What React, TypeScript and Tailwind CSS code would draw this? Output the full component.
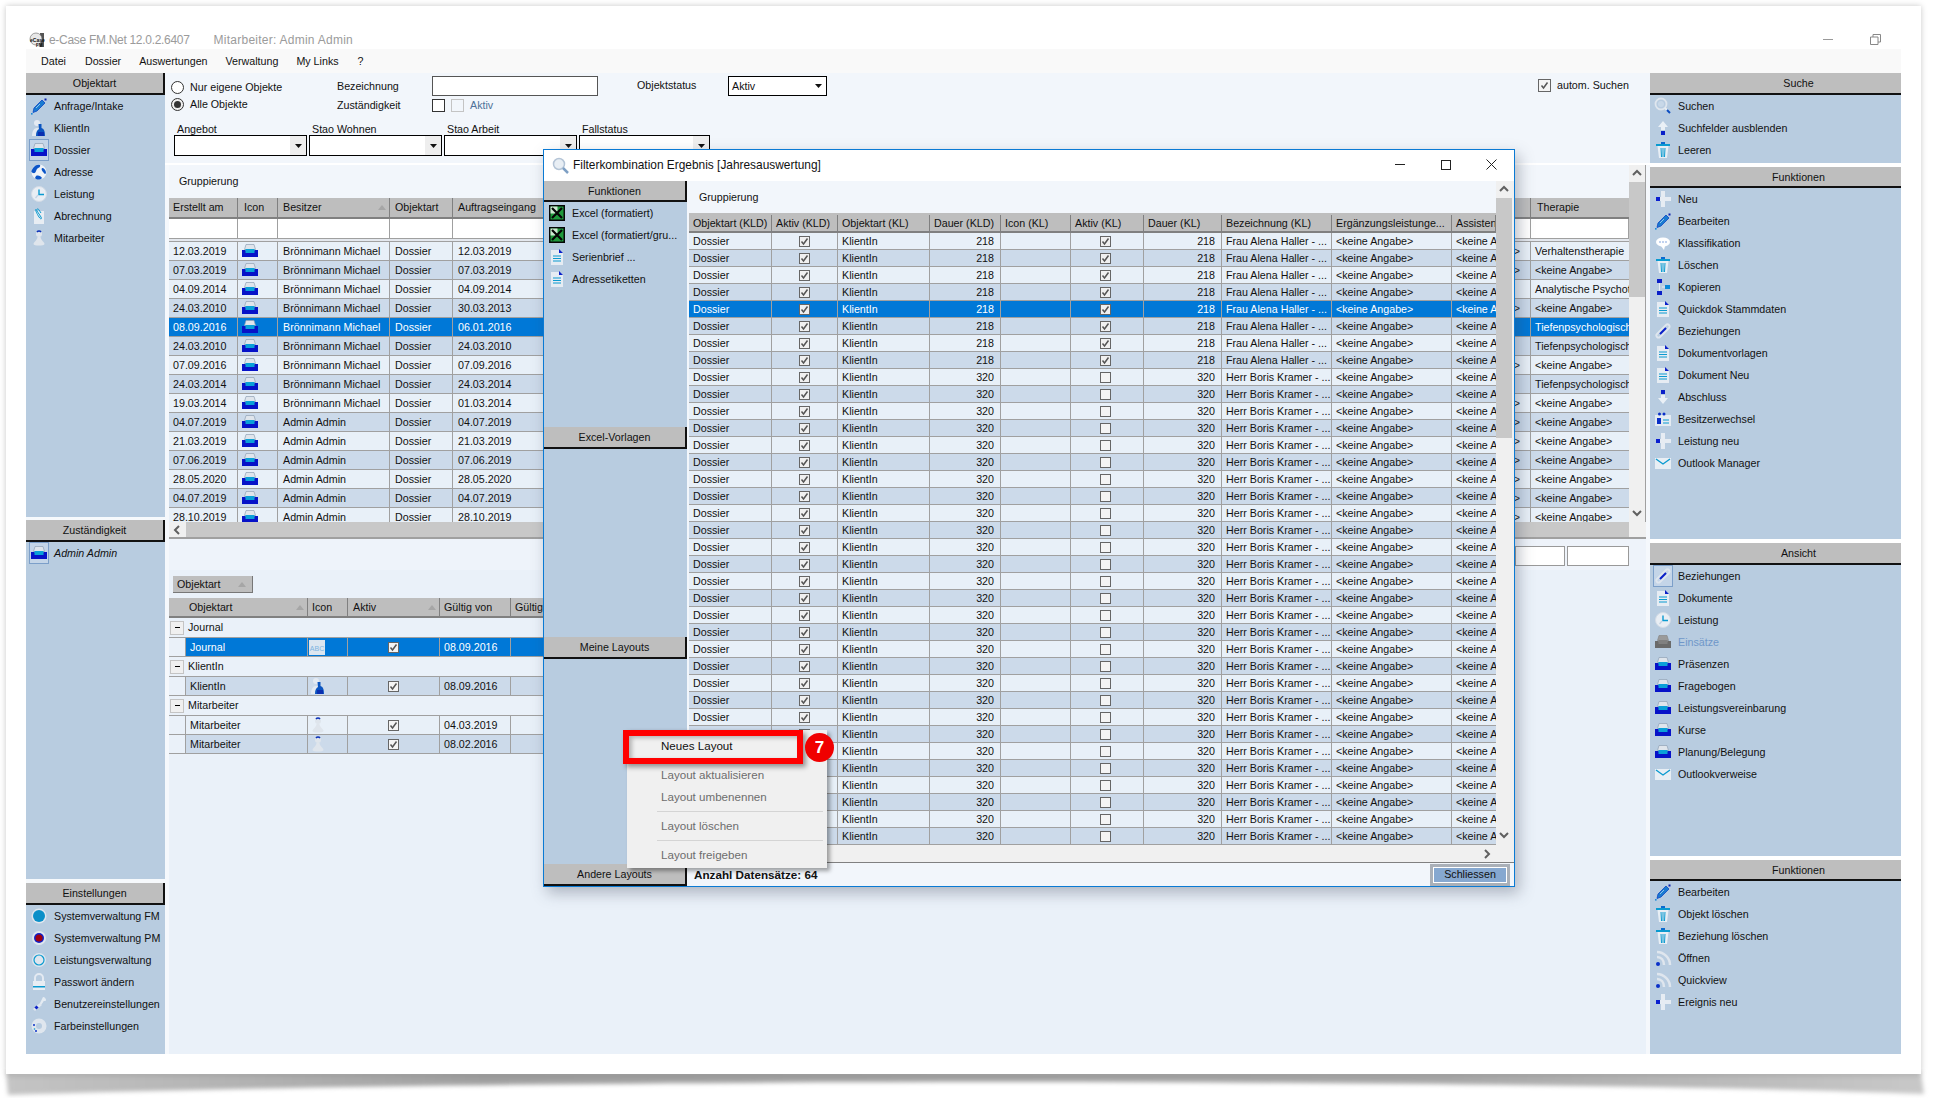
import React from "react";

type IP = { gray?: boolean };
const S = ({ children, w = 18 }: { children: React.ReactNode; w?: number }) => (
  <svg width={w} height={18} viewBox="0 0 18 18" className="shrink-0">{children}</svg>
);
const Pencil = () => (<S><path d="M4 11 12 3l3 3-8 8-4 1.5Z" fill="#1a7bd0" stroke="#0b46c4" strokeWidth=".8" /><rect x="14.5" y="1.5" width="2" height="2" fill="#0a1fb0" /><rect x="1" y="16" width="1.6" height="1.6" fill="#1a8ad8" /><path d="M6 11l4-4" stroke="#8cc4ee" /></S>);
const Person = () => (<S><circle cx="7" cy="4" r="3" fill="#e4eaf2" /><path d="M2 17c0-5 2-8 5-8s3 3 3 8Z" fill="#e4eaf2" /><path d="M8.500 5h3v4c3 1 3.500 4 3.500 8H6c0-4 1-6 3-7Z" fill="#0b55c0" /><path d="M8 13h6v4H8Z" fill="#0a2fb0" /></S>);
const Tray = ({ gray }: IP) => (<S><path d="M3.500 7.500 5 2.500h8l1.500 5Z" fill={gray ? "#9a9a9a" : "#dfe5ec"} stroke={gray ? "#888" : "#8fa0b4"} strokeWidth=".7" /><path d="M1 8h3.500l1 2h7l1-2H17v7H1Z" fill={gray ? "#6a6a6a" : "#0712c8"} /><rect x="4.500" y="7" width="9" height="4" fill={gray ? "#808080" : "#0aa0d8"} /></S>);
const Globe = () => (<S><circle cx="9" cy="9" r="7.500" fill="#eef3f8" /><path d="M3 5c2-3 5-4 7-3 1 2-2 3-3 4s-1 5-4 4-1-3 0-5ZM12 5c2 0 4 2 4 5-1 2-2 0-3-1s-2-3-1-4ZM6 13c2-1 5 0 6 2-2 2-5 2-7 0Z" fill="#0b55c8" /></S>);
const Clock = () => (<S><circle cx="9" cy="9" r="7.500" fill="#e9eef4" stroke="#d4dce6" /><path d="M9 4.500V9.500H14" stroke="#0a9ad0" strokeWidth="1.400" fill="none" /><path d="M8 10 5.500 13" stroke="#c3d3e4" strokeWidth="1.200" /></S>);
const Clip = () => (<S><path d="M4 4h10v13H4Z" fill="#e8edf3" /><path d="M6 2c-1 1 1 5 3 8s3 2 2 0-3-4-4-6 1-3 2-1l2 3" stroke="#0a9ad0" strokeWidth="1" fill="none" /></S>);
const Pawn = () => (<S><circle cx="9" cy="5" r="3" fill="#dfe5ec" /><path d="M7 3a2.500 2.500 0 0 1 4 0" stroke="#0a30b8" strokeWidth="1.500" fill="none" /><path d="M7.500 8h3c0 3 4 5 4 7 0 2-11 2-11 0s4-4 4-7Z" fill="#dfe5ec" /></S>);
const Mag = () => (<S><circle cx="7" cy="7" r="5.500" fill="none" stroke="#dfe6ee" strokeWidth="1.800" /><circle cx="7" cy="7" r="3" fill="#c8d8e8" /><path d="M11 11l2 2" stroke="#e8eef4" strokeWidth="2" /><path d="M13 13l3 3" stroke="#0b4cc0" strokeWidth="2" /></S>);
const Up = () => (<S><path d="M9 2l5 6h-3v3H7V8H4Z" fill="#eaf0f6" /><rect x="7" y="12" width="4" height="4" fill="#0a1fc8" /></S>);
const Down = () => (<S><rect x="7" y="2" width="4" height="4" fill="#0a1fc8" /><path d="M9 16l5-6h-3V7H7v3H4Z" fill="#eaf0f6" /></S>);
const Trash = () => (<S><rect x="2" y="3" width="14" height="2" fill="#0a9ad0" /><rect x="7" y="1" width="4" height="2" fill="#0a6ad0" /><path d="M3.500 5h11L13 17H5Z" fill="#e8eef4" /><path d="M7 7l.5 9M9 7v9M11 7l-.5 9" stroke="#0a9ad0" /></S>);
const Plus = () => (<S><path d="M7 1h4v6h6v4h-6v6H7v-6H3V7h4Z" fill="#e6ecf3" /><rect x="2" y="7" width="4" height="4" fill="#0a1fd0" /></S>);
const Bubble = () => (<S><ellipse cx="9" cy="8" rx="7" ry="4.500" fill="#fff" /><path d="M7 12l3 4 1-4Z" fill="#fff" /><path d="M5.500 8h1M8.500 8h1M11.500 8h1" stroke="#0a4cc0" strokeWidth="1.200" /></S>);
const Nodes = () => (<S><rect x="3" y="1" width="5" height="4" fill="#0a1fc8" /><rect x="3" y="13" width="5" height="4" fill="#0a1fc8" /><rect x="11" y="7" width="5" height="4" fill="#0a8ad8" /><path d="M5.500 5v8M8 9h3" stroke="#e8eef4" /></S>);
const Doc = () => (<S><path d="M3 2h9l3 3v12H3Z" fill="#e6ecf3" /><path d="M11 1l4 4h-4Z" fill="#0a1fc8" /><path d="M5 8h8M5 10.500h8M5 13h8" stroke="#0a9ad0" /></S>);
const Link = () => (<S><path d="M3 12l9-9c2-2 5 1 3 3l-9 9c-2 2-5-1-3-3Z" fill="none" stroke="#dfe6ee" strokeWidth="1.800" /><path d="M6 12l6-6" stroke="#0a1fc8" strokeWidth="2" /></S>);
const Owner = () => (<S><rect x="1" y="5" width="16" height="11" fill="#e4ebf2" /><circle cx="5.500" cy="4" r="1.500" fill="#0a30c8" /><circle cx="10" cy="4" r="1.500" fill="#0a30c8" /><rect x="3" y="8" width="4" height="6" fill="#0a30c8" /><path d="M9 10h6M9 13h6" stroke="#0a9ad0" /></S>);
const Mail = () => (<S><rect x="1" y="4" width="16" height="11" fill="#e8eef4" /><path d="M2 5l7 5 7-5" stroke="#0a9ad0" strokeWidth="1.400" fill="none" /></S>);
const Rss = () => (<S><path d="M3 8c4 0 7 3 7 8M3 3c7 0 13 6 13 13" stroke="#dfe6ee" strokeWidth="2.500" fill="none" /><circle cx="4" cy="15" r="2" fill="#0a30c8" /></S>);
const DotFM = () => (<S><circle cx="9" cy="9" r="7.500" fill="#dfe6ee" /><circle cx="9" cy="9" r="6" fill="#0a8fc8" /></S>);
const DotPM = () => (<S><circle cx="9" cy="9" r="7" fill="#dfe6ee" /><circle cx="9" cy="9" r="5" fill="#1020c8" /><circle cx="9" cy="9" r="3.500" fill="#a00010" /></S>);
const DotL = () => (<S><circle cx="9" cy="9" r="7" fill="#dfe6ee" /><circle cx="9" cy="9" r="5" fill="#dfe6ee" stroke="#0a9ad0" strokeWidth="1.200" /></S>);
const Lock = () => (<S><path d="M5 8V5a4 4 0 0 1 8 0v3" stroke="#e4eaf2" strokeWidth="2" fill="none" /><rect x="3" y="8" width="12" height="9" fill="#e8edf3" /><rect x="3" y="13" width="12" height="1.500" fill="#0a9ad0" /></S>);
const Wrench = () => (<S><path d="M10 8l3-6c2 0 3 2 3 3s-1 1-2 1-1 3-4 4Z" fill="#e4ebf2" /><path d="M10 8l2 2-7 6-2-2Z" fill="#dfe6ee" /><rect x="5" y="11" width="3" height="3" fill="#0a20c8" transform="rotate(45 6.500 12.500)" /></S>);
const Gear = () => (<S><circle cx="9" cy="9" r="7.500" fill="#dfe6ee" /><circle cx="9" cy="9" r="3" fill="#b8cce0" /><circle cx="4" cy="8" r="1" fill="#0a30c8" /><circle cx="6" cy="14" r="1" fill="#0a30c8" /><circle cx="4.500" cy="12" r=".8" fill="#0a9ad0" /></S>);
const Excel = () => (<S><rect x="1" y="1" width="16" height="16" fill="#050505" /><rect x="2.500" y="2.500" width="13" height="13" fill="#1f9a3c" /><path d="M2.500 2.500h7v7h-7Z" fill="#cfe8d2" /><path d="M4 4l10 10M14 4 4 14" stroke="#050505" strokeWidth="2.200" /></S>);
const Abc = () => (<svg width="16" height="15" viewBox="0 0 16 15" className="shrink-0"><rect width="16" height="15" fill="#dce6f0" /><text x="8" y="10.500" textAnchor="middle" fontSize="7" fill="#7cb4e0" fontFamily="Liberation Sans">ABC</text></svg>);
const SmallTray = () => <span className="-ml-[1px] inline-flex h-[16px] w-[18px] items-center"><Tray /></span>;

const Logo = () => (
  <svg width="16" height="16" viewBox="0 0 16 16" className="shrink-0">
    <rect x="11" y="1" width="4" height="14" fill="#555" />
    <circle cx="7" cy="7" r="6" fill="#e8e8e8" stroke="#666" strokeWidth=".6" />
    <text x="1" y="10" fontSize="5" fontWeight="700" fill="#111" fontFamily="Liberation Sans">eCase</text>
    <text x="7" y="15" fontSize="4.500" fontWeight="700" fill="#111" fontFamily="Liberation Sans">FM</text>
  </svg>
);

type Item = { icon: React.ReactNode; label: string; boxed?: boolean; italic?: boolean; disabled?: boolean };
const Head = ({ title, h = "h-[22px]", dark, pad = "" }: { title: string; h?: string; dark?: boolean; pad?: string }) => (
  <div className={`${h} shrink-0 flex items-center justify-center bg-[#bebebe] border-b-2 border-[#111] pt-[1px] ${dark ? "border-r-2" : ""} ${pad} text-[#111]`}>{title}</div>
);
const Row = ({ it }: { it: Item }) => (
  <div className="flex h-[22px] items-center">
    <div className={`ml-[3px] flex h-[22px] w-[20px] items-center justify-center ${it.boxed ? "border border-[#7c9fc9] bg-[#c4d5e8]" : ""}`}>{it.icon}</div>
    <span className={`ml-[5px] whitespace-nowrap ${it.italic ? "italic" : ""} ${it.disabled ? "text-[#6f97c9]" : "text-[#111]"}`}>{it.label}</span>
  </div>
);
const Section = ({ title, items, cls, h, dark, pad }: { title: string; items: Item[]; cls: string; h?: string; dark?: boolean; pad?: string }) => (
  <div className={`flex flex-col ${cls}`}>
    <Head title={title} h={h} dark={dark} pad={pad} />
    <div className="flex-1 bg-[#b8cce0]">{items.map((it) => <Row key={it.label} it={it} />)}</div>
  </div>
);

const Check = ({ on, light }: { on?: boolean; light?: boolean }) => (
  <span className={`inline-flex h-[11px] w-[11px] items-center justify-center border border-[#666] ${light ? "bg-[#f4f4f4]" : "bg-[#f0f0f0]"}`}>
    {on && (
      <svg width="9" height="9" viewBox="0 0 9 9"><path d="M1.500 4.500 3.500 7 7.500 1.500" stroke="#555" strokeWidth="1.500" fill="none" /></svg>
    )}
  </span>
);
const Caret = () => <svg width="7" height="4" viewBox="0 0 7 4"><path d="M0 0h7L3.500 4Z" fill="#111" /></svg>;
const Chev = ({ d }: { d: "l" | "r" | "u" | "d" }) => {
  const p = { l: "M6 1 2 5l4 4", r: "M2 1l4 4-4 4", u: "M1 6l4-4 4 4", d: "M1 2l4 4 4-4" }[d];
  return <svg width="10" height="10" viewBox="0 0 10 10"><path d={p} stroke="#606060" strokeWidth="2" fill="none" /></svg>;
};
const Sort = () => <svg width="8" height="5" viewBox="0 0 8 5"><path d="M4 0l4 5H0Z" fill="#a6a6a6" /></svg>;

const Combo = ({ label, cls }: { label: string; cls: string }) => (
  <div className={`flex flex-col ${cls}`}>
    <span className="h-[12px] pl-[3px] leading-[12px] text-[#111]">{label}</span>
    <div className="flex h-[21px] justify-end border border-black bg-white">
      <span className="flex w-[16px] items-center justify-center bg-[#eeeeee]"><Caret /></span>
    </div>
  </div>
);

type M = [string, string, string, string, string, string];
const B = "Brönnimann Michael";
const A = "Admin Admin";
const K = "<keine Angabe>";
const E = ">";
const T = "Tiefenpsychologisch";
const main: M[] = [
  ["12.03.2019", B, "12.03.2019", E, "Verhaltenstherapie", ""],
  ["07.03.2019", B, "07.03.2019", E, K, ""],
  ["04.09.2014", B, "04.09.2014", "", "Analytische Psychotherapie", ""],
  ["24.03.2010", B, "30.03.2013", E, K, ""],
  ["08.09.2016", B, "06.01.2016", "", T, "s"],
  ["24.03.2010", B, "24.03.2010", "", T, ""],
  ["07.09.2016", B, "07.09.2016", E, K, ""],
  ["24.03.2014", B, "24.03.2014", "", T, ""],
  ["19.03.2014", B, "01.03.2014", E, K, ""],
  ["04.07.2019", A, "04.07.2019", E, K, ""],
  ["21.03.2019", A, "21.03.2019", E, K, ""],
  ["07.06.2019", A, "07.06.2019", E, K, ""],
  ["28.05.2020", A, "28.05.2020", E, K, ""],
  ["04.07.2019", A, "04.07.2019", E, K, ""],
  ["28.10.2019", A, "28.10.2019", E, K, ""],
];

const HC = ({ cls, children }: { cls: string; children: React.ReactNode }) => (
  <div className={`flex h-full shrink-0 items-center justify-between overflow-hidden whitespace-nowrap border-r border-[#808080] pl-[4px] pr-[3px] text-[#111] ${cls}`}>{children}</div>
);

const MainGrid = () => (
  <div className="flex h-[357px] shrink-0">
    <div className="flex w-[1460px] shrink-0 flex-col">
      <div className="flex h-[33px] shrink-0 items-center bg-[#f2f6fb] pl-[10px] text-[#111]">Gruppierung</div>
      <div className="flex h-[21px] shrink-0 border-b-2 border-[#808080] bg-[#bebebe]">
        <HC cls="w-[69px]">Erstellt am</HC>
        <HC cls="w-[40px] pl-[6px]">Icon</HC>
        <HC cls="w-[112px] pl-[5px]">Besitzer<Sort /></HC>
        <HC cls="w-[63px] pl-[5px]">Objektart</HC>
        <HC cls="w-[108px] pl-[5px]">Auftragseingang</HC>
        <HC cls="w-[970px]"> </HC>
        <HC cls="w-[98px] border-r-0 pl-[6px]">Therapie</HC>
      </div>
      <div className="flex h-[19px] shrink-0 bg-white">
        {["w-[69px]", "w-[40px]", "w-[112px]", "w-[63px]", "w-[108px]", "w-[970px]", "w-[98px]"].map((c) => (
          <div key={c} className={`${c} shrink-0 border-r border-[#a0a0a0]`} />
        ))}
      </div>
      <div className="h-[4px] shrink-0 border-y border-[#a0a0a0] bg-[#e4e8ee]" />
      <div className="flex-1 overflow-hidden">
        {main.map((r, i) => {
          const sel = r[5] === "s";
          const bg = sel ? "bg-[#0078d7] text-white" : i % 2 ? "bg-[#ccdaea] text-[#111]" : "bg-[#e8f0f8] text-[#111]";
          const c = "flex h-full shrink-0 items-center overflow-hidden whitespace-nowrap border-r border-[#a0a0a0] pl-[4px]";
          return (
            <div key={i} className={`flex h-[19px] border-b border-[#a0a0a0] ${bg}`}>
              <div className={`${c} w-[69px]`}>{r[0]}</div>
              <div className={`${c} w-[40px] pl-[1px]`}><SmallTray /></div>
              <div className={`${c} w-[112px] pl-[5px]`}>{r[1]}</div>
              <div className={`${c} w-[63px] pl-[5px]`}>Dossier</div>
              <div className={`${c} w-[108px] pl-[5px]`}>{r[2]}</div>
              <div className={`${c} w-[970px] justify-end pr-[10px]`}>{r[3]}</div>
              <div className={`${c} w-[98px] border-r-0`}>{r[4]}</div>
            </div>
          );
        })}
      </div>
    </div>
    <div className="flex w-[16px] shrink-0 flex-col bg-[#f0f0f0]">
      <div className="flex h-[17px] items-center justify-center"><Chev d="u" /></div>
      <div className="h-[115px] bg-[#c8c8c8]" />
      <div className="flex-1" />
      <div className="flex h-[17px] items-center justify-center"><Chev d="d" /></div>
    </div>
    <div className="w-[1px] shrink-0 bg-[#a0a0a0]" />
  </div>
);

const LG = ({ w, c }: { w: string; c: React.ReactNode }) => (
  <div className={`flex h-full shrink-0 items-center overflow-hidden whitespace-nowrap border-r border-[#a0a0a0] ${w}`}>{c}</div>
);
const Group = ({ t, cls }: { t: string; cls: string }) => (
  <div className={`flex ${cls} items-center border-b border-[#a0a0a0]`}>
    <span className="ml-[1px] flex h-[14px] w-[14px] items-center justify-center border border-[#c4c4c4] bg-[#f0f0f0] text-[#111]"><span className="h-[1px] w-[5px] bg-black" /></span>
    <span className="ml-[4px] text-[#111]">{t}</span>
  </div>
);
const Child = ({ t, icon, d, sel, alt }: { t: string; icon: React.ReactNode; d: string; sel?: boolean; alt?: boolean }) => (
  <div className="flex h-[19px] border-b border-[#a0a0a0]">
    <div className="w-[16px] shrink-0" />
    <div className={`flex flex-1 border-l border-[#a0a0a0] ${sel ? "bg-[#0078d7] text-white" : alt ? "bg-[#ccdaea] text-[#111]" : "bg-[#e8f0f8] text-[#111]"}`}>
      <LG w="w-[122px] pl-[4px]" c={t} />
      <LG w="w-[40px] pl-[1px]" c={icon} />
      <LG w="w-[92px] justify-center" c={<Check on light />} />
      <LG w="w-[71px] pl-[4px]" c={d} />
      <div className="flex-1" />
    </div>
  </div>
);

const FilterBlock = () => (
  <div className="flex h-[90px] shrink-0 flex-col bg-[#f2f6fb] text-[#111]">
    <div className="flex h-[50px] shrink-0">
      <div className="flex w-[172px] flex-col gap-[1px] pl-[6px] pt-[6px]">
        <div className="flex h-[16px] items-center gap-[6px]"><span className="h-[13px] w-[13px] rounded-full border border-[#333] bg-white" />Nur eigene Objekte</div>
        <div className="flex h-[16px] items-center gap-[6px]"><span className="flex h-[13px] w-[13px] items-center justify-center rounded-full border border-[#333] bg-[#f0f0f0]"><span className="h-[7px] w-[7px] rounded-full bg-[#333]" /></span>Alle Objekte</div>
      </div>
      <div className="flex w-[95px] flex-col pt-[6px]">
        <div className="flex h-[14px] items-center">Bezeichnung</div>
        <div className="mt-[5px] flex h-[14px] items-center">Zuständigkeit</div>
      </div>
      <div className="flex w-[205px] flex-col pt-[3px]">
        <div className="h-[20px] w-[166px] border border-[#555] bg-white" />
        <div className="mt-[3px] flex h-[13px] items-center">
          <span className="h-[13px] w-[13px] border border-[#333] bg-white" />
          <span className="ml-[6px] h-[13px] w-[13px] border border-[#c4c4c4] bg-[#f2f6fb]" />
          <span className="ml-[6px] text-[#4f7198]">Aktiv</span>
        </div>
      </div>
      <div className="flex w-[91px] pt-[7px]">Objektstatus</div>
      <div className="w-[810px] pt-[3px]">
        <div className="flex h-[20px] w-[99px] items-center justify-between border border-black bg-white pl-[3px] pr-[4px]">Aktiv<Caret /></div>
      </div>
      <div className="flex items-center gap-[6px] self-start pt-[6px]">
        <span className="inline-flex h-[13px] w-[13px] items-center justify-center border border-[#666] bg-[#f4f4f4]"><svg width="9" height="9" viewBox="0 0 9 9"><path d="M1.500 4.500 3.500 7 7.500 1.500" stroke="#555" strokeWidth="1.500" fill="none" /></svg></span>
        <span>autom. Suchen</span>
      </div>
    </div>
    <div className="flex gap-[2px] pl-[9px]">
      <Combo label="Angebot" cls="w-[133px]" />
      <Combo label="Stao Wohnen" cls="w-[133px]" />
      <Combo label="Stao Arbeit" cls="w-[133px]" />
      <Combo label="Fallstatus" cls="w-[131px]" />
    </div>
  </div>
);

const LowerArea = () => (
  <div className="flex flex-1 flex-col bg-[#eaf1f9]">
    <div className="flex h-[31px] shrink-0 justify-end gap-[2px] bg-[#eef3fa] pr-[17px] pt-[7px]">
      <div className="h-[20px] w-[50px] border border-[#999] bg-white" />
      <div className="h-[20px] w-[62px] border border-[#999] bg-white" />
    </div>
    <div className="flex h-[28px] shrink-0 items-start pl-[4px] pt-[6px]">
      <div className="flex h-[17px] w-[80px] items-center justify-between border-b border-r border-[#777] bg-[#bebebe] pl-[4px] pr-[6px] text-[#111]">Objektart<Sort /></div>
    </div>
    <div className="w-[1331px]">
      <div className="flex h-[20px] border-b-2 border-[#808080] bg-[#bebebe]">
        <HC cls="w-[139px] pl-[20px]">Objektart<Sort /></HC>
        <HC cls="w-[40px]">Icon</HC>
        <HC cls="w-[92px] pl-[5px]">Aktiv<Sort /></HC>
        <HC cls="w-[71px]">Gültig von</HC>
        <HC cls="w-[70px]">Gültig bis</HC>
      </div>
      <Group t="Journal" cls="h-[20px]" />
      <Child t="Journal" sel icon={<Abc />} d="08.09.2016" />
      <Group t="KlientIn" cls="h-[20px]" />
      <Child t="KlientIn" alt icon={<Person />} d="08.09.2016" />
      <Group t="Mitarbeiter" cls="h-[20px]" />
      <Child t="Mitarbeiter" icon={<Pawn />} d="04.03.2019" />
      <Child t="Mitarbeiter" alt icon={<Pawn />} d="08.02.2016" />
    </div>
  </div>
);

const dcols = ["w-[83px]", "w-[66px]", "w-[92px]", "w-[71px]", "w-[70px]", "w-[73px]", "w-[78px]", "w-[110px]", "w-[120px]", "w-[44px]"];
const dhead = ["Objektart (KLD)", "Aktiv (KLD)", "Objektart (KL)", "Dauer (KLD)", "Icon (KL)", "Aktiv (KL)", "Dauer (KL)", "Bezeichnung (KL)", "Ergänzungsleistunge...", "Assistenz"];

const DRow = ({ i }: { i: number }) => {
  const first = i < 8;
  const sel = i === 4;
  const bg = sel ? "bg-[#0078d7] text-white" : i % 2 ? "bg-[#ccdaea] text-[#111]" : "bg-[#e8f0f8] text-[#111]";
  const c = "flex h-full shrink-0 items-center overflow-hidden whitespace-nowrap border-r border-[#a0a0a0]";
  return (
    <div className={`flex h-[17px] border-b border-[#a0a0a0] ${bg}`}>
      <div className={`${c} ${dcols[0]} pl-[4px]`}>Dossier</div>
      <div className={`${c} ${dcols[1]} justify-center`}><Check on /></div>
      <div className={`${c} ${dcols[2]} pl-[4px]`}>KlientIn</div>
      <div className={`${c} ${dcols[3]} justify-end pr-[6px]`}>{first ? "218" : "320"}</div>
      <div className={`${c} ${dcols[4]}`} />
      <div className={`${c} ${dcols[5]} justify-center pr-[4px]`}><Check on={first} light={!first} /></div>
      <div className={`${c} ${dcols[6]} justify-end pr-[6px]`}>{first ? "218" : "320"}</div>
      <div className={`${c} ${dcols[7]} pl-[4px]`}>{first ? "Frau Alena Haller - ..." : "Herr Boris Kramer - ..."}</div>
      <div className={`${c} ${dcols[8]} pl-[4px]`}>{K}</div>
      <div className={`${c} ${dcols[9]} border-r-0 pl-[4px]`}>{K}</div>
    </div>
  );
};

const Dialog = () => (
  <div className="absolute left-[543px] top-[149px] z-20 flex h-[738px] w-[972px] flex-col border border-[#0a7ad4] bg-white shadow-[4px_6px_14px_rgba(60,70,90,0.35)]">
    <div className="flex h-[31px] shrink-0 items-center pl-[8px]">
      <S><circle cx="7" cy="7" r="5.500" fill="#e8eef4" stroke="#b4c4d6" strokeWidth="1.500" /><path d="M11 11l5 5" stroke="#7e9fc4" strokeWidth="2.500" /></S>
      <span className="ml-[3px] text-[11.900px] text-[#111]">Filterkombination Ergebnis [Jahresauswertung]</span>
      <div className="ml-auto flex items-center gap-[35px] pb-[2px] pr-[17px]">
        <span className="mr-[1px] h-[1px] w-[10px] bg-[#222]" />
        <span className="h-[10px] w-[10px] border border-[#222]" />
        <svg width="11" height="11" viewBox="0 0 11 11"><path d="M.5.5l10 10M10.500.5l-10 10" stroke="#222" /></svg>
      </div>
    </div>
    <div className="flex flex-1">
      <div className="flex w-[143px] shrink-0 flex-col">
        <Section title="Funktionen" cls="h-[246px]" h="h-[21px]" dark items={[
          { icon: <Excel />, label: "Excel (formatiert)" },
          { icon: <Excel />, label: "Excel (formatiert/gru..." },
          { icon: <Doc />, label: "Serienbrief ..." },
          { icon: <Doc />, label: "Adressetiketten" },
        ]} />
        <Section title="Excel-Vorlagen" cls="h-[210px]" dark items={[]} />
        <Section title="Meine Layouts" cls="h-[227px]" dark items={[]} />
        <Head title="Andere Layouts" dark />
      </div>
      <div className="flex flex-1 flex-col bg-[#f2f6fb]">
        <div className="flex h-[681px] shrink-0">
          <div className="flex w-[809px] shrink-0 flex-col pl-[2px]">
            <div className="flex h-[32px] shrink-0 items-center pl-[10px] text-[#111]">Gruppierung</div>
            <div className="flex h-[20px] shrink-0 border-b-2 border-[#808080] bg-[#bebebe] pt-[2px]">
              {dhead.map((h, i) => <HC key={h} cls={dcols[i]}>{h}</HC>)}
            </div>
            <div className="h-[612px] shrink-0 overflow-hidden">
              {Array.from({ length: 36 }, (_, i) => <DRow key={i} i={i} />)}
            </div>
            <div className="flex h-[17px] shrink-0 items-center justify-end bg-[#f0f0f0] pr-[3px]"><Chev d="r" /></div>
          </div>
          <div className="flex w-[18px] shrink-0 flex-col bg-[#f0f0f0] pr-[2px]">
            <div className="flex h-[17px] items-center justify-center"><Chev d="u" /></div>
            <div className="h-[240px] bg-[#c8c8c8]" />
            <div className="flex-1" />
            <div className="mb-[18px] flex h-[17px] items-center justify-center"><Chev d="d" /></div>
          </div>
        </div>
        <div className="flex flex-1 items-center justify-between border-t border-[#808080] pl-[7px] pr-[4px]">
          <span className="text-[11.700px] font-bold text-[#111]">Anzahl Datensätze: 64</span>
          <div className="flex h-[22px] w-[80px] items-center justify-center border-[3px] border-[#aab0b8] bg-[#86a8d0] text-[#111] outline outline-1 outline-white -outline-offset-4">Schliessen</div>
        </div>
      </div>
    </div>
  </div>
);

const MI = ({ t, cls = "text-[#6d6d6d]" }: { t: string; cls?: string }) => (
  <div className={`flex h-[22px] items-center pl-[34px] ${cls}`}>{t}</div>
);
const ContextMenu = () => (
  <>
    <div className="absolute left-[627px] top-[730px] z-30 w-[200px] bg-[#f0f0f0] pb-[2px] pt-[5px] shadow-[3px_3px_4px_rgba(0,0,0,0.35)] text-[11.600px]">
      <MI t="Neues Layout" cls="text-[#111]" />
      <div className="mt-[7px]"><MI t="Layout aktualisieren" /></div>
      <MI t="Layout umbenennen" />
      <div className="ml-[30px] mr-[4px] mt-[3px] h-[1px] bg-[#d4d4d4]" />
      <div className="mt-[3px]"><MI t="Layout löschen" /></div>
      <div className="ml-[30px] mr-[4px] mt-[3px] h-[1px] bg-[#d4d4d4]" />
      <div className="mt-[3px]"><MI t="Layout freigeben" /></div>
    </div>
    <div className="absolute left-[623px] top-[730px] z-40 h-[34px] w-[180px] border-[6px] border-[#ff0000] shadow-[3px_3px_5px_rgba(0,0,0,0.4),inset_3px_2px_4px_rgba(0,0,0,0.25)]" />
    <div className="absolute left-[805px] top-[733px] z-40 flex h-[29px] w-[29px] items-center justify-center rounded-full bg-[#f00000] text-[17px] font-bold text-white">7</div>
  </>
);

export default function App() {
  return (
    <div className="relative h-[1103px] w-[1935px] overflow-hidden bg-white font-['Liberation_Sans',Arial,sans-serif] text-[10.700px] leading-none">
      <svg width="1935" height="40" viewBox="0 0 1935 40" className="absolute left-0 top-[1064px]">
        <defs>
          <filter id="bl"><feGaussianBlur stdDeviation="2" /></filter>
          <linearGradient id="gr" x1="0" x2="1" y1="0" y2="0">
            <stop offset="0" stopColor="#c4c4c4" /><stop offset="0.25" stopColor="#a0a0a0" /><stop offset="0.75" stopColor="#a8a8a8" /><stop offset="1" stopColor="#c8c8c8" />
          </linearGradient>
        </defs>
        <path d="M6 8H1921L1924 30C1500 14 500 14 8 31Z" fill="url(#gr)" filter="url(#bl)" />
      </svg>
      <div className="relative ml-[6px] mt-[6px] flex h-[1068px] w-[1915px] flex-col bg-white px-[20px] pt-[24px] shadow-[0_0_6px_rgba(0,0,0,0.22)]">
        <div className="flex h-[19px] shrink-0 items-center text-[12px] text-[#9b9b9b]">
          <div className="ml-[3px]"><Logo /></div>
          <span className="ml-[4px] tracking-[-0.300px]">e-Case FM.Net 12.0.2.6407</span>
          <span className="ml-[24px] tracking-[0.250px]">Mitarbeiter: Admin Admin</span>
          <div className="ml-auto mr-[20px] flex items-center gap-[35px]">
            <span className="mr-[2px] h-[1px] w-[10px] bg-[#999]" />
            <svg width="11" height="11" viewBox="0 0 11 11"><path d="M.5 3h7.500v7.500H.5ZM3 3V.5h7.500V8H8" fill="none" stroke="#888" /></svg>
          </div>
        </div>
        <div className="flex h-[24px] shrink-0 items-center bg-[#f9f9f9] text-[#111]">
          <span className="ml-[15px]">Datei</span>
          <span className="ml-[19px]">Dossier</span>
          <span className="ml-[18px]">Auswertungen</span>
          <span className="ml-[18px]">Verwaltung</span>
          <span className="ml-[18px]">My Links</span>
          <span className="ml-[19px]">?</span>
        </div>
        <div className="flex h-[981px] shrink-0">
          <div className="flex w-[139px] shrink-0 flex-col">
            <Section title="Objektart" cls="h-[444px]" dark items={[
              { icon: <Pencil />, label: "Anfrage/Intake" },
              { icon: <Person />, label: "KlientIn" },
              { icon: <Tray />, label: "Dossier", boxed: true },
              { icon: <Globe />, label: "Adresse" },
              { icon: <Clock />, label: "Leistung" },
              { icon: <Clip />, label: "Abrechnung" },
              { icon: <Pawn />, label: "Mitarbeiter" },
            ]} />
            <div className="h-[3px] bg-[#f6f9fc]" />
            <Section title="Zuständigkeit" cls="h-[359px]" dark items={[{ icon: <Tray />, label: "Admin Admin", boxed: true, italic: true }]} />
            <div className="h-[4px] bg-[#f6f9fc]" />
            <Section title="Einstellungen" cls="h-[171px]" dark items={[
              { icon: <DotFM />, label: "Systemverwaltung FM" },
              { icon: <DotPM />, label: "Systemverwaltung PM" },
              { icon: <DotL />, label: "Leistungsverwaltung" },
              { icon: <Lock />, label: "Passwort ändern" },
              { icon: <Wrench />, label: "Benutzereinstellungen" },
              { icon: <Gear />, label: "Farbeinstellungen" },
            ]} />
          </div>
          <div className="flex w-[1485px] shrink-0 flex-col bg-[#f5f8fc]">
            <FilterBlock />
            <div className="h-[2px] shrink-0 bg-white" />
            <div className="flex flex-1 flex-col pl-[4px] pr-[4px]">
              <MainGrid />
              <div className="flex h-[17px] shrink-0 items-center border-b-2 border-[#a0a0a0] bg-[#f0f0f0] pr-[17px]">
                <span className="flex w-[17px] items-center justify-center"><Chev d="l" /></span>
                <div className="h-full flex-1 bg-[#c8c8c8]" />
              </div>
              <LowerArea />
            </div>
          </div>
          <div className="flex w-[251px] shrink-0 flex-col">
            <Section title="Suche" cls="h-[90px]" pad="pl-[46px]" items={[
              { icon: <Mag />, label: "Suchen" },
              { icon: <Up />, label: "Suchfelder ausblenden" },
              { icon: <Trash />, label: "Leeren" },
            ]} />
            <div className="h-[4px] bg-white" />
            <Section title="Funktionen" cls="h-[372px]" h="h-[21px]" pad="pl-[46px]" items={[
              { icon: <Plus />, label: "Neu" },
              { icon: <Pencil />, label: "Bearbeiten" },
              { icon: <Bubble />, label: "Klassifikation" },
              { icon: <Trash />, label: "Löschen" },
              { icon: <Nodes />, label: "Kopieren" },
              { icon: <Doc />, label: "Quickdok Stammdaten" },
              { icon: <Link />, label: "Beziehungen" },
              { icon: <Doc />, label: "Dokumentvorlagen" },
              { icon: <Doc />, label: "Dokument Neu" },
              { icon: <Down />, label: "Abschluss" },
              { icon: <Owner />, label: "Besitzerwechsel" },
              { icon: <Plus />, label: "Leistung neu" },
              { icon: <Mail />, label: "Outlook Manager" },
            ]} />
            <div className="h-[4px] bg-white" />
            <Section title="Ansicht" cls="h-[313px]" h="h-[22px]" pad="pl-[46px]" items={[
              { icon: <Link />, label: "Beziehungen", boxed: true },
              { icon: <Doc />, label: "Dokumente" },
              { icon: <Clock />, label: "Leistung" },
              { icon: <Tray gray />, label: "Einsätze", disabled: true },
              { icon: <Tray />, label: "Präsenzen" },
              { icon: <Tray />, label: "Fragebogen" },
              { icon: <Tray />, label: "Leistungsvereinbarung" },
              { icon: <Tray />, label: "Kurse" },
              { icon: <Tray />, label: "Planung/Belegung" },
              { icon: <Mail />, label: "Outlookverweise" },
            ]} />
            <div className="h-[4px] bg-white" />
            <Section title="Funktionen" cls="h-[194px]" h="h-[21px]" pad="pl-[46px]" items={[
              { icon: <Pencil />, label: "Bearbeiten" },
              { icon: <Trash />, label: "Objekt löschen" },
              { icon: <Trash />, label: "Beziehung löschen" },
              { icon: <Rss />, label: "Öffnen" },
              { icon: <Rss />, label: "Quickview" },
              { icon: <Plus />, label: "Ereignis neu" },
            ]} />
          </div>
        </div>
      </div>
      <Dialog />
      <ContextMenu />
    </div>
  );
}
